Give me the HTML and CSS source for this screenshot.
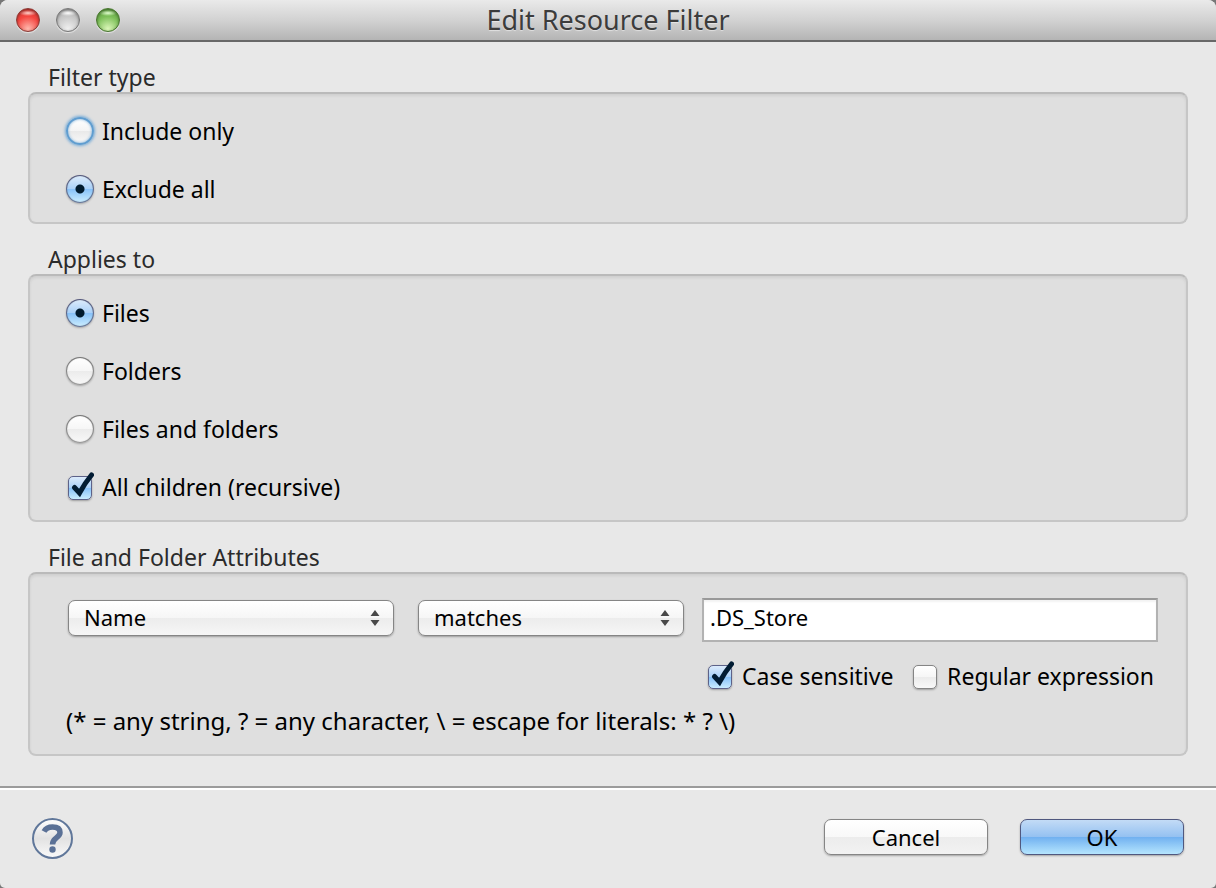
FILE: index.html
```html
<!DOCTYPE html>
<html lang="en">
<head>
    <meta charset="UTF-8">
    <meta name="viewport" content="width=device-width, initial-scale=1.0">
    <title>Edit Resource Filter</title>
    <link rel="stylesheet" href="styles.css">
</head>
<body>
    <form class="window">
        <header class="titlebar">
            <div class="lights">
                <button type="button" class="light red" aria-label="Close"></button>
                <button type="button" class="light gray" aria-label="Minimize" disabled></button>
                <button type="button" class="light green" aria-label="Zoom"></button>
            </div>
            <h1>Edit Resource Filter</h1>
        </header>

        <main class="content">
            <fieldset>
                <legend>Filter type</legend>
                <div class="group">
                    <label class="option"><input type="radio" class="radio focused" name="type">Include only</label>
                    <label class="option"><input type="radio" class="radio" name="type" checked>Exclude all</label>
                </div>
            </fieldset>

            <fieldset>
                <legend>Applies to</legend>
                <div class="group">
                    <label class="option"><input type="radio" class="radio" name="applies" checked>Files</label>
                    <label class="option"><input type="radio" class="radio" name="applies">Folders</label>
                    <label class="option"><input type="radio" class="radio" name="applies">Files and folders</label>
                    <label class="option">
                        <span class="tick">
                            <input type="checkbox" class="checkbox" checked>
                            <svg viewBox="0 0 28 30"><path d="M8.500 17.500L13.500 23C17 16.500 21 10.500 25.500 5"/></svg>
                        </span>All children (recursive)
                    </label>
                </div>
            </fieldset>

            <fieldset>
                <legend>File and Folder Attributes</legend>
                <div class="group attributes">
                    <div class="fields">
                        <div class="popup attribute">
                            <select aria-label="Attribute"><option>Name</option></select>
                            <svg viewBox="0 0 10 18"><path d="M5 1L9.500 7H.5zM5 17L9.500 11H.5z"/></svg>
                        </div>
                        <div class="popup operator">
                            <select aria-label="Operator"><option>matches</option></select>
                            <svg viewBox="0 0 10 18"><path d="M5 1L9.500 7H.5zM5 17L9.500 11H.5z"/></svg>
                        </div>
                        <div class="pattern">
                            <input type="text" class="text" aria-label="Pattern" value=".DS_Store">
                            <div class="checks">
                                <label class="option">
                                    <span class="tick">
                                        <input type="checkbox" class="checkbox" checked>
                                        <svg viewBox="0 0 28 30"><path d="M8.500 17.500L13.500 23C17 16.500 21 10.500 25.500 5"/></svg>
                                    </span>Case sensitive
                                </label>
                                <label class="option">
                                    <span class="tick">
                                        <input type="checkbox" class="checkbox">
                                        <svg viewBox="0 0 28 30"><path d="M8.500 17.500L13.500 23C17 16.500 21 10.500 25.500 5"/></svg>
                                    </span>Regular expression
                                </label>
                            </div>
                        </div>
                    </div>
                    <p class="hint">(* = any string, ? = any character, \ = escape for literals: * ? \)</p>
                </div>
            </fieldset>
        </main>

        <footer class="footer">
            <button type="button" class="help" aria-label="Help">
                <svg viewBox="0 0 42 42">
                    <defs>
                        <linearGradient id="helpFill" x1="0" y1="0" x2="0" y2="1">
                            <stop offset="0" stop-color="#fff"/>
                            <stop offset=".5" stop-color="#e2e2e2"/>
                            <stop offset="1" stop-color="#fafafa"/>
                        </linearGradient>
                    </defs>
                    <circle cx="20.500" cy="20.500" r="19.500" fill="url(#helpFill)" stroke="#60779a" stroke-width="2"/>
                    <path d="M12 13.500C14 10 17 9 20.500 9C25.500 9 28 11 28 14.500C28 20 20.500 19.500 20.500 26.500" fill="none" stroke="#5b7196" stroke-width="5.500"/>
                    <circle cx="20.500" cy="31.500" r="3.200" fill="#5b7196"/>
                </svg>
            </button>
            <div class="buttons">
                <button type="button" class="button">Cancel</button>
                <button type="submit" class="button default">OK</button>
            </div>
        </footer>
    </form>
</body>
</html>
```
FILE: styles.css
```css
html {
    background-color: #777;
}

body {
    margin: 0;
    font-family: "Noto Sans", "Open Sans", sans-serif;
    font-size: 23px;
    line-height: 28px;
    color: #000;
}

* {
    box-sizing: border-box;
}

.window {
    display: flex;
    flex-direction: column;
    min-height: 100vh;
    background-color: #e8e8e8;
    border-radius: 8px 8px 5px 5px;
    overflow: hidden;
}

/* title bar */

.titlebar {
    display: grid;
    grid-template-columns: 1fr auto 1fr;
    align-items: center;
    height: 42px;
    padding: 0 16px;
    background: linear-gradient(#eaeaea, #d2d2d2 50%, #b4b4b4);
    border-bottom: 2px solid #686868;
}

.titlebar h1 {
    margin: 0;
    font-size: 27px;
    font-weight: 400;
    line-height: 40px;
    color: #3c3c3c;
    text-shadow: 0 1px 1px rgba(255, 255, 255, 0.5);
}

.lights {
    display: flex;
    gap: 16px;
}

.light {
    width: 24px;
    height: 24px;
    padding: 0;
    border: 1px solid;
    border-radius: 50%;
    box-shadow: inset 0 1px 3px rgba(0, 0, 0, 0.4), 0 1px 1px rgba(255, 255, 255, 0.6);
}

.red {
    border-color: #8a3a34;
    background: radial-gradient(ellipse 9px 3px at 50% 4px, #ffd2cc, transparent), radial-gradient(circle at 50% 90%, #ffb9ae, #f4453f 55%, #cf3833);
}

.gray {
    border-color: #777;
    background: radial-gradient(ellipse 9px 3px at 50% 4px, #fff, transparent), radial-gradient(circle at 50% 90%, #f0f0f0, #c4c4c4 60%, #aaa);
}

.green {
    border-color: #47752d;
    background: radial-gradient(ellipse 9px 3px at 50% 4px, #e2ffd0, transparent), radial-gradient(circle at 50% 90%, #dcf7b9, #7cbf58 55%, #5a9c3d);
}

/* groups */

.content {
    display: flex;
    flex-direction: column;
    gap: 21px;
    padding: 21px 28px 30px;
}

fieldset {
    min-width: 0;
    margin: 0;
    padding: 0;
    border: 0;
}

legend {
    padding: 0 20px 1px;
    color: #2b2b2b;
}

.group {
    display: flex;
    flex-direction: column;
    gap: 30px;
    padding: 23px 28px 19px 36px;
    background-color: #dfdfdf;
    border: 2px solid #c6c6c6;
    border-top-color: #bababa;
    border-radius: 8px;
    box-shadow: inset 0 2px 3px rgba(0, 0, 0, 0.07);
}

.option {
    display: flex;
    align-items: center;
    gap: 8px;
    white-space: nowrap;
}

.radio {
    appearance: none;
    flex: none;
    width: 28px;
    height: 28px;
    margin: 0;
    border: 1px solid transparent;
    border-radius: 50%;
    background: linear-gradient(#fff, #f6f6f6 50%, #ebebeb 50%, #f8f8f8) padding-box, linear-gradient(#777, #999) border-box;
    box-shadow: inset 0 0 1px rgba(0, 0, 0, 0.4), 0 1px 2px rgba(0, 0, 0, 0.25);
}

.radio:checked {
    background: radial-gradient(circle, #001a2e 4px, transparent 5px) padding-box, linear-gradient(#dcebfb, #a9d0f8 50%, #86c0f8 50%, #c9ecff) padding-box, linear-gradient(#55587c, #66779a) border-box;
}

.focused {
    border: 2px solid #5f9dd0;
    background: linear-gradient(#fff, #f4f4f4 50%, #e9e9e9 50%, #f8f8f8) padding-box;
    box-shadow: inset 0 0 3px #6fa8d8, 0 0 3px 1px #6fa8d8;
}

.tick {
    position: relative;
    display: flex;
    justify-content: center;
    flex: none;
    width: 28px;
    padding-top: 2px;
}

.checkbox {
    appearance: none;
    width: 24px;
    height: 24px;
    margin: 0;
    border: 1px solid #858585;
    border-radius: 5px;
    background: linear-gradient(#fff, #f6f6f6 50%, #ebebeb 50%, #f8f8f8);
    box-shadow: 0 1px 2px rgba(0, 0, 0, 0.3);
}

.checkbox:checked {
    border-color: #5d6289;
    background: linear-gradient(#dcebfb, #a9d0f8 50%, #86c0f8 50%, #c9ecff);
}

.tick svg {
    position: absolute;
    left: 0;
    bottom: 0;
    display: none;
    width: 28px;
    height: 30px;
    fill: none;
    stroke: #021c33;
    stroke-width: 5;
    stroke-linecap: round;
    pointer-events: none;
}

.checkbox:checked + svg {
    display: block;
}

/* attributes */

.attributes {
    gap: 17px;
    padding-top: 24px;
    padding-bottom: 19px;
}

.fields {
    display: flex;
    padding-left: 2px;
}

.popup {
    position: relative;
    min-width: 0;
    padding-top: 2px;
}

.attribute {
    flex: 0 1 326px;
    margin-right: 24px;
}

.operator {
    flex: 0 1 266px;
    margin-right: 18px;
}

.popup select {
    appearance: none;
    width: 100%;
    height: 36px;
    padding: 0 30px 2px 15px;
    border: 1px solid #858585;
    border-radius: 7px;
    background: linear-gradient(#fff, #f6f6f6 50%, #ececec 50%, #f6f6f6);
    box-shadow: 0 1px 2px rgba(0, 0, 0, 0.3);
    font: inherit;
    font-size: 22px;
    color: #000;
}

.popup svg {
    position: absolute;
    top: 11px;
    right: 14px;
    width: 10px;
    height: 18px;
    fill: #484848;
    pointer-events: none;
}

.pattern {
    flex: 1;
    min-width: 0;
}

.text {
    display: block;
    width: 100%;
    height: 44px;
    padding: 0 6px 6px;
    border: 2px solid #b2b2b2;
    border-top-color: #999;
    background-color: #fff;
    box-shadow: inset 0 2px 2px rgba(0, 0, 0, 0.05);
    font: inherit;
    font-size: 22px;
    color: #000;
}

.checks {
    display: flex;
    justify-content: space-between;
    padding: 20px 4px 0;
}

.hint {
    margin: 0;
    font-size: 24px;
}

/* footer */

.footer {
    display: flex;
    justify-content: space-between;
    align-items: flex-start;
    padding: 28px 32px;
    border-top: 2px solid #9b9b9b;
    box-shadow: inset 0 2px #fff;
}

.help {
    padding: 2px 0 0;
    border: 0;
    background: none;
}

.help svg {
    display: block;
    width: 42px;
    height: 42px;
}

.buttons {
    display: flex;
    gap: 32px;
    padding-top: 3px;
}

.button {
    width: 164px;
    height: 36px;
    padding: 0;
    border: 1px solid #858585;
    border-radius: 7px;
    background: linear-gradient(#fff, #f8f8f8 50%, #ececec 50%, #f2f2f2);
    box-shadow: 0 1px 2px rgba(0, 0, 0, 0.3);
    font: inherit;
    font-size: 22px;
    color: #000;
}

.default {
    border-color: #50587f;
    background: linear-gradient(#c3dbf6, #94c1f1 50%, #70b0f0 50%, #b5e5fe);
}
```
